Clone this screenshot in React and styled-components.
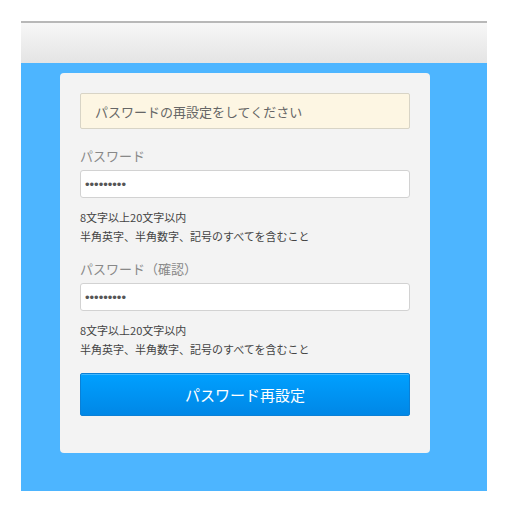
import React from "react";
import styled, { createGlobalStyle } from "styled-components";

const GlobalStyle = createGlobalStyle`
  body {
    margin: 0;
    background: #fff;
    font-family: "Noto Sans CJK JP", "Noto Sans", sans-serif;
  }
`;

const Frame = styled.div`
  margin: 21px 0 0 21px;
  width: 466px;
`;

const Header = styled.div`
  height: 40px;
  border-top: 2px solid #b8b8b8;
  background: linear-gradient(to bottom, #f7f7f7, #e4e4e4);
`;

const Main = styled.div`
  background: #4db5ff;
  padding: 10px 0 38px 39px;
`;

const Card = styled.form`
  width: 330px;
  padding: 20px 20px 37px;
  background: #f3f3f3;
  border-radius: 4px;
`;

const Notice = styled.div`
  box-sizing: border-box;
  height: 36px;
  padding: 0 14px;
  display: flex;
  align-items: center;
  background: #fdf6e3;
  border: 1px solid #d8d4c6;
  border-radius: 2px;
  color: #666;
  font-size: 13px;
`;

const Label = styled.label`
  display: block;
  margin: ${(p) => (p.$first ? "17px" : "13px")} 0 4px;
  color: #888;
  font-size: 13px;
  line-height: 20px;
`;

const Input = styled.input`
  box-sizing: border-box;
  display: block;
  width: 330px;
  height: 28px;
  padding: 0 4px;
  border: 1px solid #d2d2d2;
  border-radius: 3px;
  background: #fff;
  color: #555;
  font-size: 13px;
  font-family: "Liberation Sans", sans-serif;
  outline: none;
`;

const Help = styled.p`
  margin: 10px 0 0;
  color: #444;
  font-size: 11px;
  line-height: 19px;
`;

const Submit = styled.button`
  display: block;
  width: 330px;
  height: 43px;
  margin-top: 14px;
  border: 1px solid #0a80d6;
  border-radius: 2px;
  background: linear-gradient(to bottom, #00a0ff, #0087e6);
  box-shadow: inset 0 1px 0 rgba(255, 255, 255, 0.25);
  color: #fff;
  font-family: "Noto Sans CJK JP", "Noto Sans", sans-serif;
  font-size: 15px;
`;

const rule = ["8文字以上20文字以内", "半角英字、半角数字、記号のすべてを含むこと"];

const App = () => {
  return (
    <>
      <GlobalStyle />
      <Frame>
        <Header />
        <Main>
          <Card onSubmit={(e) => e.preventDefault()}>
            <Notice>パスワードの再設定をしてください</Notice>
            <Label $first>パスワード</Label>
            <Input type="password" defaultValue="password1" />
            <Help>
              {rule[0]}
              <br />
              {rule[1]}
            </Help>
            <Label>パスワード（確認）</Label>
            <Input type="password" defaultValue="password1" />
            <Help>
              {rule[0]}
              <br />
              {rule[1]}
            </Help>
            <Submit type="submit">パスワード再設定</Submit>
          </Card>
        </Main>
      </Frame>
    </>
  );
};

export default App;
